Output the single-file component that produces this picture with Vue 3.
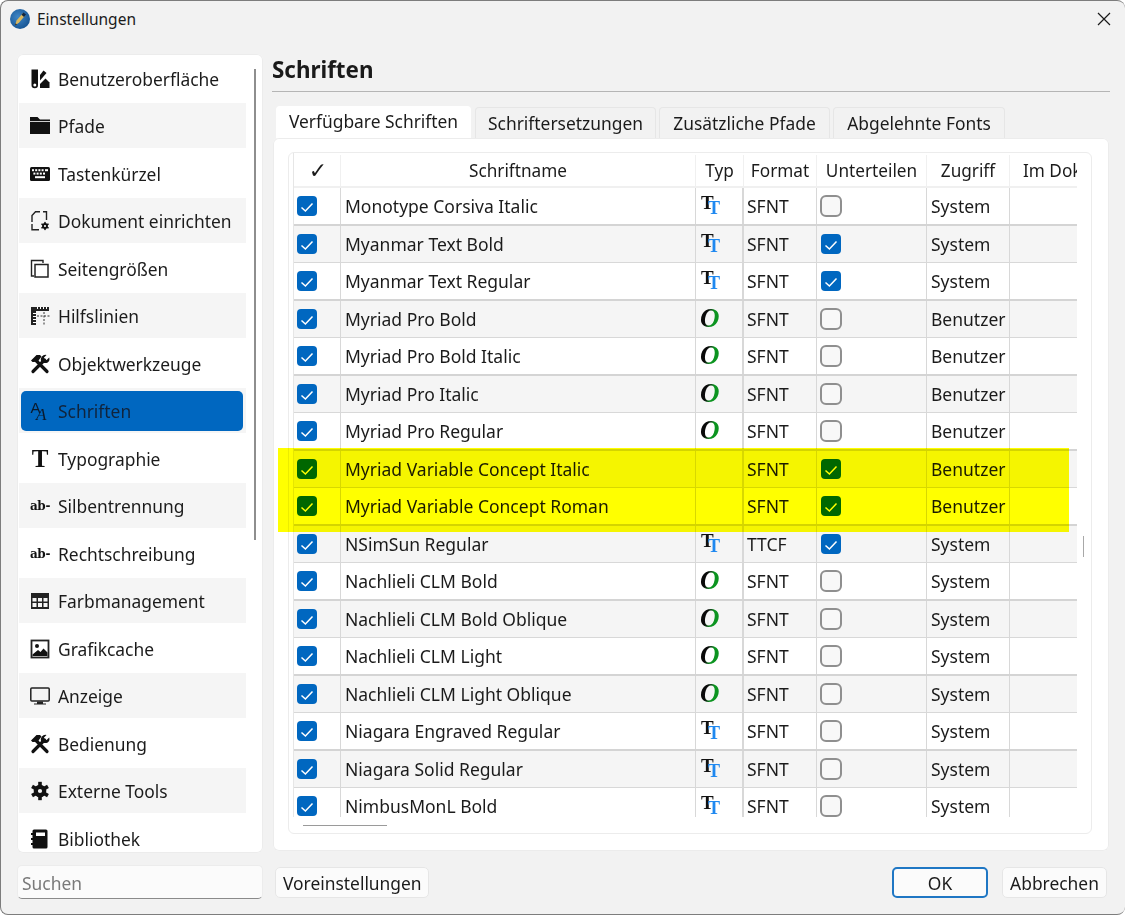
<script setup>
const gear = (cx, cy, r, t, w) => {
  let s = `<circle cx="${cx}" cy="${cy}" r="${r}" fill="none" stroke="#111" stroke-width="${w}"/>`
  for (let a = 0; a < 360; a += 60) {
    s += `<rect x="${cx - t / 2}" y="${cy - r - w / 2 - t * 0.8}" width="${t}" height="${t * 1.4}" fill="#111" transform="rotate(${a} ${cx} ${cy})"/>`
  }
  return s
}
const tools = `<path d="M6 6.5 17 17.5M14.5 6 3 17.5" stroke="#111" stroke-width="3.2" stroke-linecap="round" fill="none"/><path d="M2.5 8 1 6.5 6.5 1h3.5l1.5 1.5L7.5 8 6 6.5 4.5 8Z" fill="#111"/><path d="M19.2 3.5 16.6 6 14.6 5.4 14 3.4 16.5 0.9A4.6 4.6 0 0 0 11.2 7.2L13 9 16.4 9.1A4.6 4.6 0 0 0 19.2 3.5Z" fill="#111"/>`
const icons = {
  ui: `<path d="M1.5 0.5H8V16a3.2 3.2 0 0 1-6.5 0Z" fill="#111"/><circle cx="4.8" cy="16" r="1.5" fill="#fff"/><path d="M10 6 13.5 1.5 16.5 4 10 11.5Z" fill="#111"/><path d="M10 19V15L15.5 9.5 19.5 13.5V19Z" fill="#111"/>`,
  folder: `<path d="M0 1h7.5l2.5 2.5h10V18H0Z" fill="#111"/><path d="M0 5.5h20" stroke="#fff" stroke-width="0.8"/>`,
  keyboard: `<rect x="0" y="3" width="20" height="14" rx="1.5" fill="#111"/><g fill="#fff"><rect x="2" y="5.2" width="2" height="2"/><rect x="5.2" y="5.2" width="2" height="2"/><rect x="8.4" y="5.2" width="2" height="2"/><rect x="11.6" y="5.2" width="2" height="2"/><rect x="15" y="5.2" width="3" height="2"/><rect x="3.4" y="8.6" width="2" height="2"/><rect x="6.6" y="8.6" width="2" height="2"/><rect x="9.8" y="8.6" width="2" height="2"/><rect x="13" y="8.6" width="2" height="2"/><rect x="5" y="12.2" width="10" height="2"/></g>`,
  doc: `<path d="M10 0.8H5.5L2 4.5V11M2 13V18.8H9M13 0.8H16.5V9" fill="none" stroke="#222" stroke-width="1.4"/>` + gear(15, 15, 2, 1.5, 1.8),
  pages: `<path d="M4 17H1.5V1.5H13V4" fill="none" stroke="#222" stroke-width="1.4"/><rect x="5" y="5.5" width="13" height="12.5" fill="none" stroke="#222" stroke-width="1.5"/>`,
  guides: `<path d="M1 1h18v4H6v14H1Z" fill="#222"/><g fill="#fff"><rect x="7" y="1" width="1" height="2"/><rect x="10" y="1" width="1" height="2"/><rect x="13" y="1" width="1" height="2"/><rect x="16" y="1" width="1" height="2"/><rect x="3" y="7" width="3" height="1"/><rect x="3" y="10" width="3" height="1"/><rect x="3" y="13" width="3" height="1"/><rect x="3" y="16" width="3" height="1"/></g><path d="M7 10h13M14 6v14" stroke="#333" stroke-width="1" stroke-dasharray="2 1.5"/>`,
  tools,
  grid: `<rect x="1" y="2" width="18" height="16" fill="#222"/><g fill="#f5f5f5"><rect x="2.5" y="7" width="4" height="3.5"/><rect x="8" y="7" width="4" height="3.5"/><rect x="13.5" y="7" width="4" height="3.5"/><rect x="2.5" y="12" width="4" height="4"/><rect x="8" y="12" width="4" height="4"/><rect x="13.5" y="12" width="4" height="4"/></g>`,
  image: `<rect x="1.5" y="1.5" width="17" height="17" fill="none" stroke="#222" stroke-width="1.8"/><circle cx="7" cy="7" r="2" fill="#111"/><path d="M2.5 15.5 8 11l2.5 2 3-3.5 4 4v3.5h-15Z" fill="#111"/>`,
  monitor: `<rect x="0.8" y="2" width="18.4" height="13" rx="1" fill="none" stroke="#222" stroke-width="1.5"/><path d="M7 15.5h6v2h3v1H4v-1h3Z" fill="#222"/>`,
  gear: gear(10, 10, 4.2, 3.6, 4.2),
  book: `<rect x="2.5" y="0.5" width="15" height="19" rx="1.5" fill="#111"/><rect x="6" y="3.5" width="9" height="3.5" fill="#fff"/><g fill="#111"><rect x="1" y="4" width="2.5" height="2"/><rect x="1" y="9" width="2.5" height="2"/><rect x="1" y="14" width="2.5" height="2"/></g>`,
}
const nav = [
  ['Benutzeroberfläche', 'ui'], ['Pfade', 'folder'], ['Tastenkürzel', 'keyboard'],
  ['Dokument einrichten', 'doc'], ['Seitengrößen', 'pages'], ['Hilfslinien', 'guides'],
  ['Objektwerkzeuge', 'tools'], ['Schriften', 'aa'], ['Typographie', 't'],
  ['Silbentrennung', 'ab'], ['Rechtschreibung', 'ab'], ['Farbmanagement', 'grid'],
  ['Grafikcache', 'image'], ['Anzeige', 'monitor'], ['Bedienung', 'tools'],
  ['Externe Tools', 'gear'], ['Bibliothek', 'book'],
].map(([label, icon], i) => ({ label, icon, svg: icons[icon], active: label === 'Schriften', first: i === 0 }))

const tabs = ['Verfügbare Schriften', 'Schriftersetzungen', 'Zusätzliche Pfade', 'Abgelehnte Fonts']
const heads = ['Schriftname', 'Typ', 'Format', 'Unterteilen', 'Zugriff']
const fonts = [
  ['Monotype Corsiva Italic', 'tt', 0, 0],
  ['Myanmar Text Bold', 'tt', 1, 0],
  ['Myanmar Text Regular', 'tt', 1, 0],
  ['Myriad Pro Bold', 'o', 0, 1],
  ['Myriad Pro Bold Italic', 'o', 0, 1],
  ['Myriad Pro Italic', 'o', 0, 1],
  ['Myriad Pro Regular', 'o', 0, 1],
  ['Myriad Variable Concept Italic', '', 1, 1],
  ['Myriad Variable Concept Roman', '', 1, 1],
  ['NSimSun Regular', 'tt', 1, 0],
  ['Nachlieli CLM Bold', 'o', 0, 0],
  ['Nachlieli CLM Bold Oblique', 'o', 0, 0],
  ['Nachlieli CLM Light', 'o', 0, 0],
  ['Nachlieli CLM Light Oblique', 'o', 0, 0],
  ['Niagara Engraved Regular', 'tt', 0, 0],
  ['Niagara Solid Regular', 'tt', 0, 0],
  ['NimbusMonL Bold', 'tt', 0, 0],
].map(([name, type, sub, user]) => ({
  name, type, sub: !!sub, format: name.startsWith('NSimSun') ? 'TTCF' : 'SFNT', access: user ? 'Benutzer' : 'System',
}))
</script>

<template>
  <div class="window">
    <svg class="defs" width="0" height="0" aria-hidden="true">
      <defs>
        <linearGradient id="ograd" x1="0" x2="1" y1="0" y2="0.4">
          <stop offset="0.45" stop-color="#0a0a0a" />
          <stop offset="0.72" stop-color="#0c9420" />
        </linearGradient>
        <radialGradient id="logo" cx="0.4" cy="0.4" r="0.7">
          <stop offset="0" stop-color="#3f86c6" />
          <stop offset="1" stop-color="#12508f" />
        </radialGradient>
      </defs>
    </svg>

    <header class="titlebar">
      <svg class="logo" width="20" height="20" viewBox="0 0 20 20">
        <circle cx="10" cy="10" r="10" fill="url(#logo)" />
        <path d="M5 16.5 6.5 11.5 13 4l2.5 2-6.3 7.5Z" fill="#d9b860" />
        <path d="M11.5 5.8 13.4 3.4 16 5.6 14 8Z" fill="#12263f" />
        <path d="M5 16.5 5.6 14.2 7 15.4Z" fill="#222" />
      </svg>
      <span class="title">Einstellungen</span>
      <svg class="close" width="14" height="14" viewBox="0 0 14 14">
        <path d="M1 1 13 13M13 1 1 13" stroke="#1a1a1a" stroke-width="1.2" fill="none" />
      </svg>
    </header>

    <div class="body">
      <nav class="sidebar">
        <div v-for="item in nav" :key="item.label" class="nav-row" :class="{ first: item.first, active: item.active }">
          <div class="nav-inner">
            <span class="nav-icon">
              <svg v-if="item.icon === 'aa'" width="20" height="20" viewBox="0 0 20 20">
                <text x="0.5" y="12" class="g-sans" font-size="15" fill="#0a1a2c">A</text>
                <text x="6" y="19" class="g-serif-i" font-size="17" fill="#0a1a2c">A</text>
              </svg>
              <span v-else-if="item.icon === 't'" class="glyph-t">T</span>
              <span v-else-if="item.icon === 'ab'" class="glyph-ab">ab-</span>
              <svg v-else width="20" height="20" viewBox="0 0 20 20" v-html="item.svg"></svg>
            </span>
            <span>{{ item.label }}</span>
          </div>
        </div>
        <i class="side-scroll"></i>
      </nav>

      <main class="main">
        <h1>Schriften</h1>
        <div class="tabs">
          <div v-for="(t, i) in tabs" :key="t" class="tab" :class="{ on: i === 0 }">{{ t }}</div>
        </div>
        <section class="panel">
          <div class="frame">
            <div class="viewport">
              <div class="row head">
                <div class="cell center check-head">✓</div>
                <div v-for="h in heads" :key="h" class="cell center">{{ h }}</div>
                <div class="cell clip">Im Dokument</div>
              </div>
              <div v-for="f in fonts" :key="f.name" class="row data">
                <div class="cell pad-check"><span class="box on"><svg width="20" height="20" viewBox="0 0 20 20"><path d="M4.5 11.5 8.4 15 15.5 7.5" /></svg></span></div>
                <div class="cell pad">{{ f.name }}</div>
                <div class="cell type">
                  <svg v-if="f.type === 'tt'" width="20" height="20" viewBox="0 0 20 20">
                    <text x="1" y="12.5" class="g-serif-b" font-size="19" fill="#111">T</text>
                    <text x="8" y="18" class="g-serif-b" font-size="18" fill="#1e88f0">T</text>
                  </svg>
                  <svg v-else-if="f.type === 'o'" width="20" height="20" viewBox="0 0 20 20">
                    <text x="0" y="17.5" class="g-serif-bi" font-size="27" fill="url(#ograd)">O</text>
                  </svg>
                </div>
                <div class="cell pad-f">{{ f.format }}</div>
                <div class="cell pad-sub">
                  <span v-if="f.sub" class="box on"><svg width="20" height="20" viewBox="0 0 20 20"><path d="M4.5 11.5 8.4 15 15.5 7.5" /></svg></span>
                  <span v-else class="box off"></span>
                </div>
                <div class="cell pad">{{ f.access }}</div>
                <div class="cell"></div>
              </div>
            </div>
            <i class="h-scroll"></i>
            <i class="v-scroll"></i>
            <i class="marker"></i>
          </div>
        </section>
      </main>

      <input class="search" placeholder="Suchen" />
      <footer class="footer">
        <button class="btn preset">Voreinstellungen</button>
        <span class="spacer"></span>
        <button class="btn ok">OK</button>
        <button class="btn cancel">Abbrechen</button>
      </footer>
    </div>
  </div>
</template>

<style scoped>
.window {
  width: 1125px;
  height: 915px;
  box-sizing: border-box;
  background: #f2f2f2;
  border: 1px solid #7d7d7d;
  border-right: 0;
  border-radius: 8px;
  display: flex;
  flex-direction: column;
  overflow: hidden;
  font-family: "Noto Sans", "Liberation Sans", sans-serif;
  font-size: 17.4px;
  color: #1b1b1b;
}
.defs { position: absolute; }
.titlebar {
  height: 37px;
  flex: none;
  box-sizing: border-box;
  display: flex;
  align-items: center;
  padding: 0 14px 2px 9px;
}
.logo { margin-right: 7px; }
.title { font-size: 15.5px; }
.close { margin-left: auto; }
.body {
  flex: 1;
  min-height: 0;
  display: grid;
  grid-template-columns: 246px 1fr;
  grid-template-rows: 799px 34px;
  column-gap: 9px;
  row-gap: 12px;
  padding: 16px 15px 0 16px;
}
.sidebar {
  position: relative;
  background: #fff;
  border-radius: 6px;
  box-shadow: 0 0 0 1px #ececec inset;
  padding: 2px 17px 0 2px;
  overflow: hidden;
}
.nav-row {
  height: 50px;
  box-sizing: border-box;
  padding-top: 2px;
  display: flex;
  align-items: center;
}
.nav-row.first { height: 47px; padding: 0 0 2px; }
.nav-row:nth-child(even) { height: 45px; padding: 0; background: #f5f5f5; }
.nav-inner {
  flex: 1;
  height: 40px;
  margin: 0 3px 0 2px;
  padding-left: 9px;
  display: flex;
  align-items: center;
  gap: 8px;
  border-radius: 5px;
}
.nav-row.active .nav-inner { background: #0067c0; color: #10243c; }
.nav-icon {
  width: 20px;
  height: 20px;
  flex: none;
  display: flex;
  align-items: center;
  justify-content: center;
  color: #111;
}
.glyph-t {
  font-family: "Liberation Serif", serif;
  font-weight: 700;
  font-size: 25px;
  line-height: 20px;
}
.glyph-ab {
  font-family: "DejaVu Serif", serif;
  font-weight: 700;
  font-size: 12px;
  letter-spacing: -0.3px;
  white-space: nowrap;
}
.g-sans { font-family: "Liberation Sans", sans-serif; }
.g-serif-i { font-family: "Liberation Serif", serif; font-style: italic; }
.g-serif-b { font-family: "Liberation Serif", serif; font-weight: 700; }
.g-serif-bi { font-family: "Liberation Serif", serif; font-weight: 700; font-style: italic; }
.side-scroll {
  position: absolute;
  left: 237px;
  top: 15px;
  width: 2px;
  height: 471px;
  background: #8e8e8e;
}
.main {
  min-width: 0;
  display: flex;
  flex-direction: column;
}
h1 {
  margin: 0;
  height: 38px;
  box-sizing: border-box;
  font-size: 22.4px;
  font-weight: 700;
  line-height: 31px;
  border-bottom: 1px solid #b5b5b5;
  color: #1a1a1a;
}
.tabs {
  display: grid;
  grid-template-columns: 195px 182px 171px 172px;
  column-gap: 3px;
  padding: 14px 0 0 4px;
  height: 46px;
  box-sizing: border-box;
}
.tab {
  height: 31px;
  box-sizing: border-box;
  margin-top: 1px;
  display: flex;
  align-items: center;
  justify-content: center;
  border: 1px solid #e6e6e6;
  border-bottom: 0;
  border-radius: 4px 4px 0 0;
  white-space: nowrap;
}
.tab.on {
  background: #fff;
  border-color: #fff;
  margin-top: 0;
  height: 32px;
  padding-bottom: 4px;
}
.tab:nth-child(2) { margin-left: 1px; }
.panel {
  flex: 1;
  min-height: 0;
  margin: 0 1px 2px 1px;
  background: #fff;
  border-radius: 6px;
  box-shadow: 0 0 0 1px #ececec inset;
  padding: 14px 17px 17px 15px;
  position: relative;
}
.frame {
  position: relative;
  height: 100%;
  box-sizing: border-box;
  border: 1px solid #ececec;
  border-radius: 6px;
  padding: 0 14px 16px 4px;
}
.viewport {
  height: 100%;
  overflow: hidden;
  border-left: 1px solid #e6e6e6;
  font-size: 17.5px;
}
.row {
  display: grid;
  grid-template-columns: 47px 355px 48px 73px 110px 83px 67px;
}
.head {
  height: 35px;
  padding-top: 2px;
  border-bottom: 2px solid #f0f0f0;
  box-sizing: border-box;
  font-size: 17.2px;
}
.data {
  height: 38px;
  box-sizing: border-box;
  border-bottom: 2px solid #d4d4d4;
}
.data:nth-child(odd) {
  height: 37px;
  background: #f5f5f5;
  border-bottom: 1px solid #d8d8d8;
}
.cell {
  display: flex;
  align-items: center;
  white-space: nowrap;
  overflow: hidden;
  border-right: 1px solid #d8d8d8;
  min-width: 0;
}
.head .cell { border-right-color: #f0f0f0; }
.data .cell:nth-child(3) { border-right-width: 2px; }
.data .cell:nth-child(7) { border-right: 0; }
.center { justify-content: center; }
.clip { padding-left: 13px; border-right: 0; }
.check-head { font-family: "DejaVu Sans", sans-serif; font-weight: 700; font-size: 22px; padding-left: 2px; }
.pad { padding-left: 4px; }
.pad-f { padding-left: 3px; }
.pad-check { padding-left: 3px; }
.pad-sub { padding-left: 4px; }
.type { padding-left: 4px; }
.box {
  width: 20px;
  height: 20px;
  box-sizing: border-box;
  border-radius: 4px;
  flex: none;
  display: block;
}
.box svg { display: block; }
.box path { fill: none; stroke: #fff; stroke-width: 1.5; }
.box.on { background: #0067c0; }
.box.off {
  width: 22px;
  height: 22px;
  margin-left: -1px;
  background: #f8f8f8;
  border: 2px solid #8f8f8f;
  border-radius: 6px;
}
.h-scroll {
  position: absolute;
  left: 14px;
  top: 672px;
  width: 84px;
  height: 1px;
  background: #9a9a9a;
}
.v-scroll {
  position: absolute;
  left: 794px;
  top: 383px;
  width: 1px;
  height: 21px;
  background: #a8a8a8;
}
.marker {
  position: absolute;
  left: -11px;
  top: 295px;
  width: 791px;
  height: 84px;
  background: #ffff00;
  mix-blend-mode: multiply;
}
.search {
  box-sizing: border-box;
  width: 100%;
  height: 34px;
  padding: 2px 4px 0;
  background: #fbfbfb;
  border: 1px solid #ececec;
  border-bottom: 1px solid #8a8a8a;
  border-radius: 5px;
  font: inherit;
  color: inherit;
  outline: none;
}
.search::placeholder { color: #7a7a7a; opacity: 1; }
.footer {
  display: flex;
  align-items: center;
  padding-left: 3px;
  padding-right: 3px;
}
.spacer { flex: 1; }
.btn {
  height: 31px;
  padding: 3px 6px 0;
  background: #fbfbfb;
  border: 1px solid #e6e6e6;
  border-radius: 5px;
  font: inherit;
  color: inherit;
  line-height: 1;
}
.preset { padding-left: 7px; }
.ok {
  width: 96px;
  margin-right: 14px;
  border: 2px solid #1f77c4;
}
.cancel { width: 105px; }
</style>
